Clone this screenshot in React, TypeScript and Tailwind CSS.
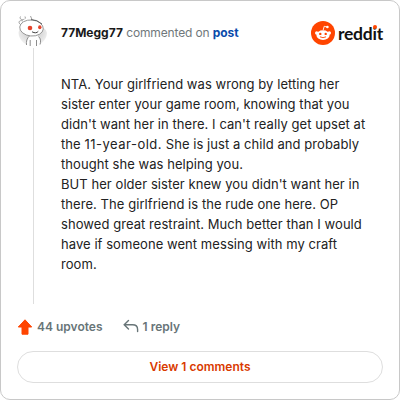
import { ReactNode } from "react";

const paragraphs: ReactNode[][] = [
  [
    "NTA. Your girlfriend was wrong by letting her",
    "sister enter your game room, knowing that you",
    "didn't want her in there. I can't really get upset at",
    <>the <span className="tracking-[0.5px]">11-year-old.</span> She is just a child and probably</>,
    "thought she was helping you.",
  ],
  [
    "BUT her older sister knew you didn't want her in",
    "there. The girlfriend is the rude one here. OP",
    "showed great restraint. Much better than I would",
    "have if someone went messing with my craft",
    "room.",
  ],
];

function Avatar() {
  return (
    <svg viewBox="0 0 32 33" className="block h-[33px] w-8" fill="none">
      <defs>
        <radialGradient id="shade" cx="50%" cy="35%" r="65%">
          <stop offset="0.35" stopColor="#d4d4d4" />
          <stop offset="1" stopColor="#f6f6f6" />
        </radialGradient>
      </defs>
      <path d="M1.500 18a14.300 14.300 0 0 0 28.500 0Q28 10 15 10T1.500 18Z" fill="url(#shade)" />
      <path d="M9.500 30.500C9 26 10 22.500 13 20h7.500c3 2.500 3.500 6 2.500 10l-5 3h-5Z" fill="#fff" />
      <path d="M9.500 30C9 26.500 10 23 12.500 21M21.500 21.500c2.300 2 2.500 5 1.500 8M13.200 25v6M19.500 25v6" stroke="#808080" strokeWidth="0.9" />
      <ellipse cx="14.500" cy="13" rx="11.800" ry="8" fill="#fff" stroke="#909090" strokeWidth="0.9" transform="rotate(5 14.500 13)" />
      <path d="M3.500 9.500C.5 7.500 2.500 4.500 6 6M3.500 1.500C2 4 5 5.500 7.500 4M8.500 3.500 8 1.500M13.500 1l1.500 3.500" stroke="#888" strokeWidth="0.8" />
      <path d="M14 4.600Q20 4.500 25 9" stroke="#555" strokeWidth="0.9" />
      <circle cx="13" cy="13" r="2.300" fill="#e4452d" />
      <ellipse cx="22.800" cy="12.300" rx="1.700" ry="2" fill="#e4452d" />
      <path d="M15 16.800q4.200 2.200 6.300-.5" stroke="#444" strokeWidth="1" />
    </svg>
  );
}

function RedditLogo() {
  return (
    <div className="flex items-center text-[#111]">
      <svg viewBox="0 0 24 24" className="h-6 w-6">
        <circle cx="12" cy="12" r="12" fill="#ff4500" />
        <path d="m12.200 9 1-3.700 2.800.7" stroke="#fff" strokeWidth="0.9" fill="none" />
        <circle cx="16.400" cy="6" r="1.300" fill="#fff" />
        <circle cx="5.700" cy="12" r="1.700" fill="#fff" />
        <circle cx="18.300" cy="12" r="1.700" fill="#fff" />
        <ellipse cx="12" cy="14.100" rx="6.600" ry="4.900" fill="#fff" />
        <circle cx="9.300" cy="12.900" r="1.200" fill="#ff4500" />
        <circle cx="14.700" cy="12.900" r="1.200" fill="#ff4500" />
        <path d="M9.300 16q2.700 1.600 5.400 0" stroke="#ff4500" strokeWidth="0.9" fill="none" strokeLinecap="round" />
      </svg>
      <span className="relative ml-[3px] h-6 w-[45px] whitespace-nowrap font-['Lato',sans-serif] text-[17.500px] leading-[25px] font-bold tracking-[-0.25px]">
        reddit
        <span className="absolute top-1 left-[35px] h-1 w-1 rounded-full bg-[#ff4500]" />
      </span>
    </div>
  );
}

function Action({ icon, children }: { icon: ReactNode; children: ReactNode }) {
  return (
    <div className="flex h-4 items-center gap-1">
      {icon}
      <span className="whitespace-nowrap">{children}</span>
    </div>
  );
}

export default function App() {
  return (
    <div className="h-[400px] w-[400px] bg-white font-['Inter',sans-serif]">
      <article className="flex h-full flex-col rounded-[10px] border border-[#c8c8c8] px-4 pt-[14px]">
        <header className="flex h-[33px] items-start">
          <Avatar />
          <p className="ml-3 pt-[10px] text-[12px] leading-4 whitespace-nowrap text-[#70787b]">
            <span className="font-bold text-[#1a1a1b]">77Megg77</span>{" "}
            <span className="tracking-[-0.15px]">commented on</span>{" "}
            <a className="font-bold tracking-[-0.1px] text-[#0a4bab]">post</a>
          </p>
          <div className="ml-auto pt-[6px]">
            <RedditLogo />
          </div>
        </header>

        <div className="ml-4 h-[256px] border-l border-[#dedede] pt-[26px] pl-[27px] text-[13px] leading-5 tracking-[0.06px] text-[#222]">
          {paragraphs.map((lines, i) => (
            <p key={i}>
              {lines.map((line, j) => (
                <span key={j} className="block whitespace-nowrap">{line}</span>
              ))}
            </p>
          ))}
        </div>

        <div className="mt-[15px] flex h-4 items-center gap-5 text-[12px] leading-4 font-semibold text-[#687578]">
          <Action
            icon={
              <svg viewBox="0 0 16 16" className="h-4 w-4">
                <path d="M8 .8 14.700 8H11v7.200H5V8H1.300Z" fill="#ff4500" stroke="#ff4500" strokeLinejoin="round" />
              </svg>
            }
          >
            44 upvotes
          </Action>
          <Action
            icon={
              <svg viewBox="0 0 16 16" className="h-4 w-4" fill="none" stroke="#687578" strokeWidth="1.400" strokeLinecap="round">
                <path d="M5.500 1.500 1.200 5.800l4.300 4.300M1.500 5.800H9.500Q14.600 5.800 14.600 10.500v2" />
              </svg>
            }
          >
            1 reply
          </Action>
        </div>

        <button className="mt-4 h-8 rounded-full border border-[#dedede] text-[12px] leading-4 font-semibold text-[#d93a00]">
          View 1 comments
        </button>
      </article>
    </div>
  );
}
